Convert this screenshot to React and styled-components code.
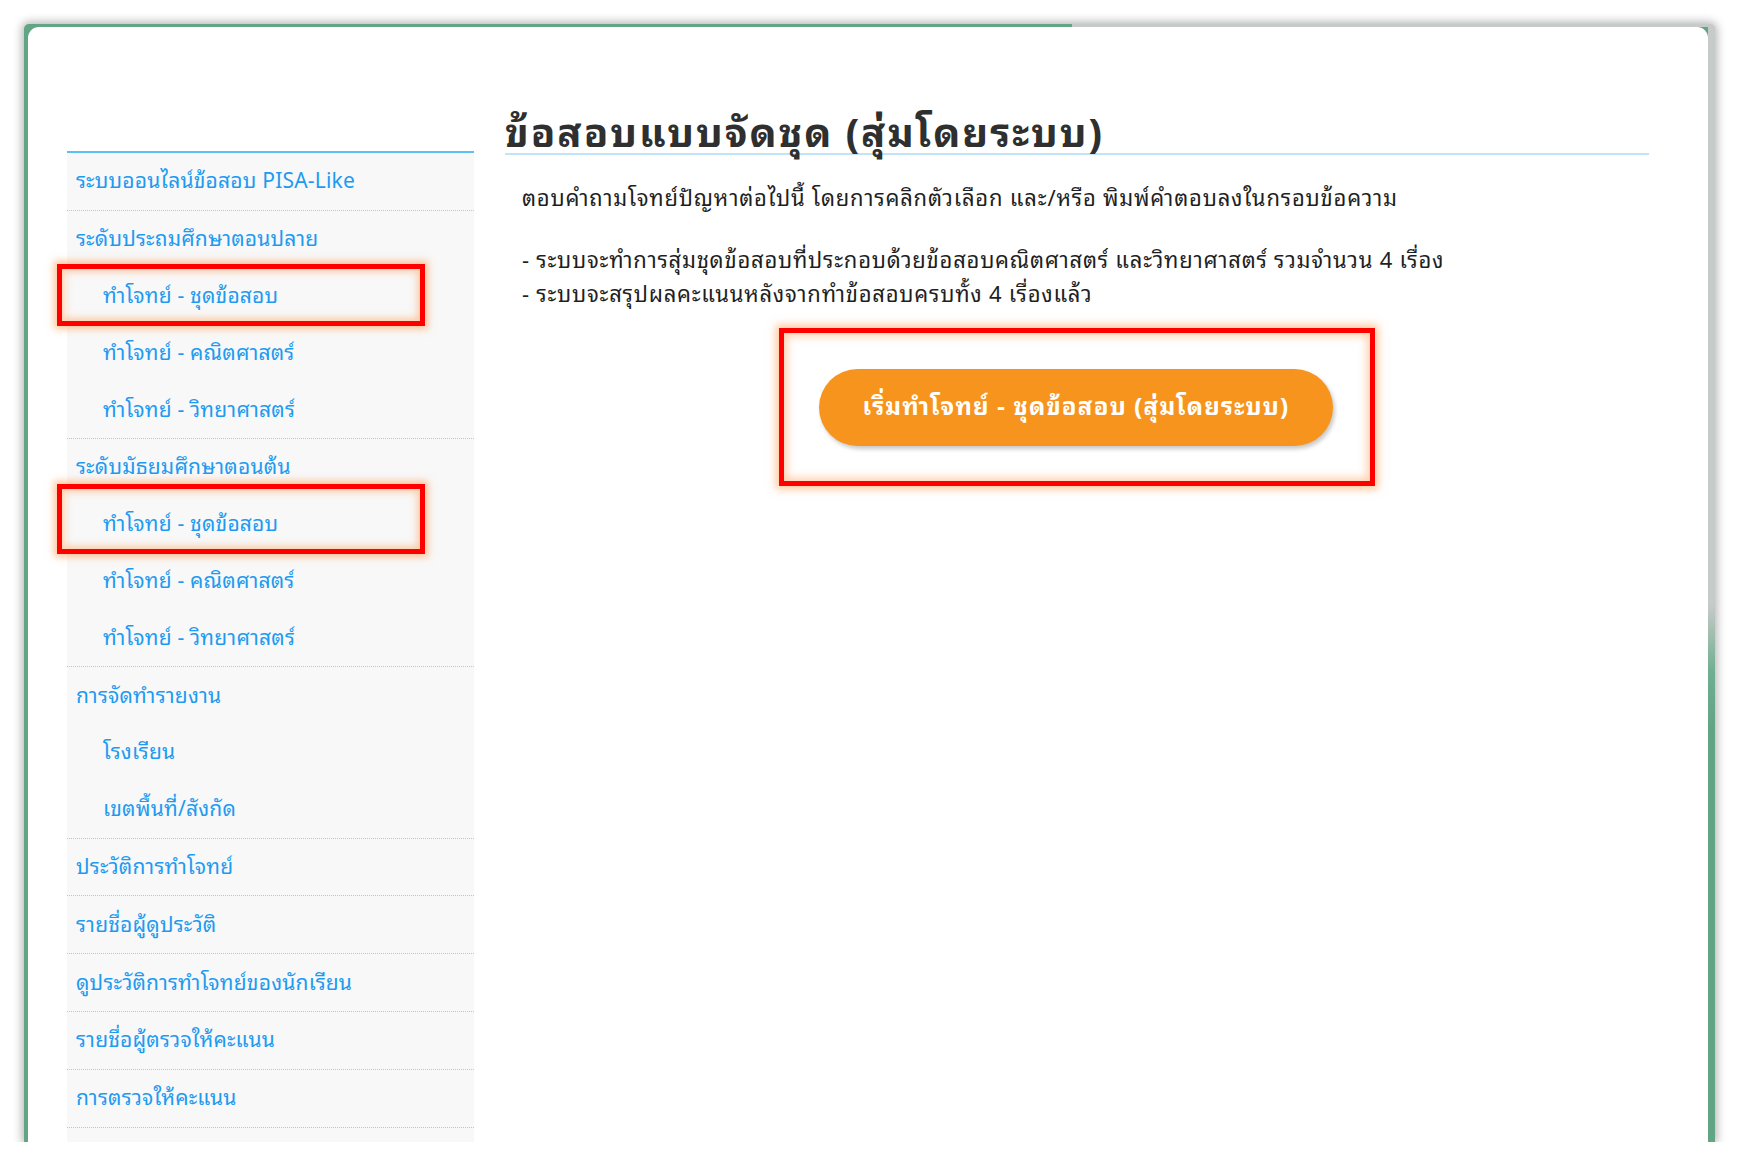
import React from "react";
import styled, { createGlobalStyle } from "styled-components";

const GlobalStyle = createGlobalStyle`
  html, body {
    margin: 0;
    padding: 0;
    background: #ffffff;
  }
  body {
    font-family: "Noto Sans Thai Looped", Loma, Tahoma, "Noto Sans Thai", "Noto Sans", "DejaVu Sans", sans-serif;
  }
  * { box-sizing: border-box; }
`;

const Frame = styled.div`
  margin: 24px 26px 0 24px;
  height: 1118px;
  padding: 3px 7px 0 4px;
  border-radius: 5px 5px 0 0;
  background-color: #62a585;
  background-image:
    linear-gradient(#c6cac8, #c6cac8),
    linear-gradient(to bottom, #c6cac8 0%, #c6cac8 52%, #6fae90 58%, #62a585 63%);
  background-size: 38% 3px, 7px 100%;
  background-position: right top, right top;
  background-repeat: no-repeat;
  box-shadow: 0 0 10px 2px rgba(0, 0, 0, 0.3);
`;

const Card = styled.div`
  height: 100%;
  background: #ffffff;
  border-radius: 11px 11px 0 0;
  overflow: hidden;
  display: flex;
  gap: 31px;
  padding: 86px 59px 0 39px;
`;

const Sidebar = styled.nav`
  width: 407px;
  flex: none;
  margin-top: 38px;
  background: #f8f8f8;
  border-top: 2px solid #5cc0f5;
`;

const Group = styled.div`
  border-bottom: 1px dotted #c4c4c4;
`;

const Item = styled.a`
  position: relative;
  display: flex;
  align-items: center;
  height: 56.8px;
  padding: 0 0 5px ${(p) => (p.$sub ? "36px" : "9px")};
  font-size: 21px;
  letter-spacing: 0.2px;
  color: #1e9bf0;
  text-decoration: none;
  white-space: nowrap;
  cursor: pointer;
`;

const Mark = styled.span`
  position: absolute;
  left: -10px;
  width: 368px;
  top: ${(p) => p.$top}px;
  bottom: ${(p) => p.$bottom}px;
  border: 5px solid #ff0000;
  box-shadow: 0 0 7px 3px rgba(255, 150, 70, 0.55),
    inset 0 0 7px 3px rgba(255, 160, 90, 0.5);
  pointer-events: none;
`;

const Main = styled.main`
  flex: 1;
  display: flex;
  flex-direction: column;
`;

const Title = styled.h1`
  margin: 0;
  height: 42px;
  padding-bottom: 7px;
  font-size: 40px;
  letter-spacing: 2px;
  line-height: 33px;
  font-weight: 700;
  color: #2f2f2f;
  border-bottom: 2px solid #c2e4f8;
  white-space: nowrap;
`;

const Intro = styled.p`
  margin: 25px 0 0 17px;
  font-size: 22px;
  letter-spacing: 0.8px;
  line-height: 32px;
  color: #1f1f1f;
  white-space: nowrap;
`;

const Notes = styled.ul`
  list-style: none;
  margin: 29px 0 0 17px;
  padding: 0;
`;

const Note = styled.li`
  font-size: 22px;
  letter-spacing: 0.75px;
  line-height: 34px;
  color: #1f1f1f;
  white-space: nowrap;
`;

const Callout = styled.div`
  align-self: center;
  margin-top: 19px;
  display: flex;
  padding: 36px 37px 35px 35px;
  border: 5px solid #ff0000;
  box-shadow: 0 0 8px 3px rgba(255, 150, 70, 0.55),
    inset 0 0 8px 3px rgba(255, 160, 90, 0.5);
`;

const StartButton = styled.button`
  width: 514px;
  height: 77px;
  padding: 0 0 7px;
  border: none;
  border-radius: 39px;
  background: #f7941d;
  color: #ffffff;
  font-family: inherit;
  font-size: 24px;
  letter-spacing: 1.2px;
  font-weight: 700;
  box-shadow: 2px 3px 4px rgba(0, 0, 0, 0.22);
  cursor: pointer;
`;

const groups = [
  { items: [{ label: "ระบบออนไลน์ข้อสอบ PISA-Like" }] },
  {
    items: [
      { label: "ระดับประถมศึกษาตอนปลาย" },
      { label: "ทำโจทย์ - ชุดข้อสอบ", sub: true, mark: [-4, -2] },
      { label: "ทำโจทย์ - คณิตศาสตร์", sub: true },
      { label: "ทำโจทย์ - วิทยาศาสตร์", sub: true },
    ],
  },
  {
    items: [
      { label: "ระดับมัธยมศึกษาตอนต้น" },
      { label: "ทำโจทย์ - ชุดข้อสอบ", sub: true, mark: [-12, -1] },
      { label: "ทำโจทย์ - คณิตศาสตร์", sub: true },
      { label: "ทำโจทย์ - วิทยาศาสตร์", sub: true },
    ],
  },
  {
    items: [
      { label: "การจัดทำรายงาน" },
      { label: "โรงเรียน", sub: true },
      { label: "เขตพื้นที่/สังกัด", sub: true },
    ],
  },
  { items: [{ label: "ประวัติการทำโจทย์" }] },
  { items: [{ label: "รายชื่อผู้ดูประวัติ" }] },
  { items: [{ label: "ดูประวัติการทำโจทย์ของนักเรียน" }] },
  { items: [{ label: "รายชื่อผู้ตรวจให้คะแนน" }] },
  { items: [{ label: "การตรวจให้คะแนน" }] },
];

export default function App() {
  return (
    <>
      <GlobalStyle />
      <Frame>
        <Card>
          <Sidebar>
            {groups.map((g, gi) => (
              <Group key={gi}>
                {g.items.map((it, ii) => (
                  <Item key={ii} $sub={it.sub}>
                    {it.label}
                    {it.mark && <Mark $top={it.mark[0]} $bottom={it.mark[1]} />}
                  </Item>
                ))}
              </Group>
            ))}
          </Sidebar>
          <Main>
            <Title>ข้อสอบแบบจัดชุด (สุ่มโดยระบบ)</Title>
            <Intro>
              ตอบคำถามโจทย์ปัญหาต่อไปนี้ โดยการคลิกตัวเลือก และ/หรือ พิมพ์คำตอบลงในกรอบข้อความ
            </Intro>
            <Notes>
              <Note>- ระบบจะทำการสุ่มชุดข้อสอบที่ประกอบด้วยข้อสอบคณิตศาสตร์ และวิทยาศาสตร์ รวมจำนวน 4 เรื่อง</Note>
              <Note>- ระบบจะสรุปผลคะแนนหลังจากทำข้อสอบครบทั้ง 4 เรื่องแล้ว</Note>
            </Notes>
            <Callout>
              <StartButton>เริ่มทำโจทย์ - ชุดข้อสอบ (สุ่มโดยระบบ)</StartButton>
            </Callout>
          </Main>
        </Card>
      </Frame>
    </>
  );
}
